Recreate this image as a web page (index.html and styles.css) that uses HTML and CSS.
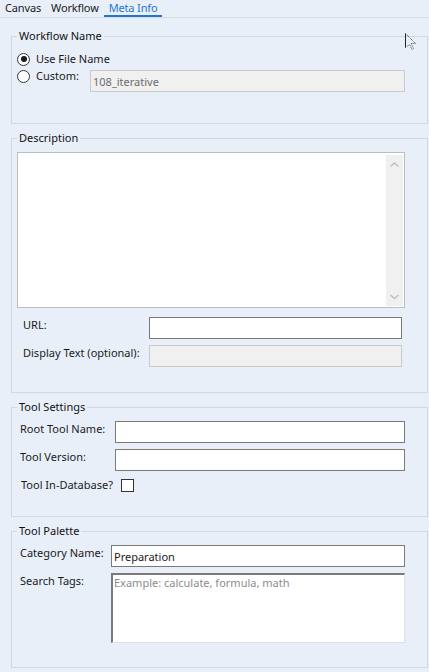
FILE: index.html
```html
<!DOCTYPE html>
<html>
<head>
<meta charset="utf-8">
<link rel="stylesheet" href="styles.css">
</head>
<body>
<div class="tabs">
  <div class="tab">Canvas</div>
  <div class="tab">Workflow</div>
  <div class="tab active">Meta Info</div>
</div>
<div class="content">
  <fieldset class="group g1">
    <legend>Workflow Name</legend>
    <div class="radio-row">
      <span class="radio checked"></span>
      <span class="rlabel">Use File Name</span>
    </div>
    <div class="radio-row custom">
      <span class="radio"></span>
      <span class="rlabel custom-label">Custom:</span>
      <input class="field disabled w-custom" type="text" value="108_iterative" disabled>
    </div>
  </fieldset>

  <fieldset class="group g2">
    <legend>Description</legend>
    <div class="desc">
      <textarea class="desc-text"></textarea>
      <div class="scrollbar">
        <svg class="chev" width="17" height="10" viewBox="0 0 17 10"><polyline points="4.5,6.5 8.5,3 12.5,6.5" fill="none" stroke="#bfbfbf" stroke-width="1.5"/></svg>
        <svg class="chev" width="17" height="10" viewBox="0 0 17 10"><polyline points="4.5,3 8.5,6.5 12.5,3" fill="none" stroke="#bfbfbf" stroke-width="1.5"/></svg>
      </div>
    </div>
    <div class="frow url-row">
      <label class="lab lab-url">URL:</label>
      <input class="field w-url" type="text">
    </div>
    <div class="frow">
      <label class="lab lab-url">Display Text (optional):</label>
      <input class="field disabled w-url" type="text" disabled>
    </div>
  </fieldset>

  <fieldset class="group g3">
    <legend>Tool Settings</legend>
    <div class="frow first">
      <label class="lab lab-ts">Root Tool Name:</label>
      <input class="field w-ts" type="text">
    </div>
    <div class="frow">
      <label class="lab lab-ts">Tool Version:</label>
      <input class="field w-ts" type="text">
    </div>
    <div class="check-row">
      <span class="clabel">Tool In-Database?</span>
      <span class="checkbox"></span>
    </div>
  </fieldset>

  <fieldset class="group g4">
    <legend>Tool Palette</legend>
    <div class="frow first">
      <label class="lab lab-tp">Category Name:</label>
      <input class="field w-tp" type="text" value="Preparation">
    </div>
    <div class="frow">
      <label class="lab lab-tp">Search Tags:</label>
      <textarea class="tags" placeholder="Example: calculate, formula, math"></textarea>
    </div>
  </fieldset>
</div>
<svg class="cursor" width="14" height="20" viewBox="0 0 14 20">
  <path d="M1.5 1.5 L1.5 15.5" stroke="#222" stroke-width="1" fill="none"/>
  <path d="M1.5 1.5 L11.5 11.5 L7 11.5 L9.5 16.5 L8 17.5 L5.5 12.5 L1.5 15.5" stroke="#444" stroke-width="1" stroke-dasharray="1 1" fill="none"/>
</svg>
</body>
</html>
```
FILE: styles.css
```css
* { box-sizing: border-box; }
html, body {
  margin: 0;
  padding: 0;
  width: 429px;
  height: 672px;
  overflow: hidden;
  background: #e9eff9;
}
body {
  font-family: "Noto Sans", "Open Sans", sans-serif;
  font-size: 11px;
  color: #1a1a1a;
  position: relative;
}
.tabs {
  display: flex;
  height: 18px;
  border-bottom: 1px solid #d6dce6;
}
.tab {
  padding: 0 5px;
  height: 17px;
  line-height: 15px;
  color: #1a1a1a;
  letter-spacing: -0.15px;
}
.tab.active {
  color: #1e78cf;
  border-bottom: 2px solid #1e78cf;
}
.content {
  padding: 10px 1px 0 11px;
}
.group {
  margin: 0 0 6px 0;
  border: 1px solid #d3d8e0;
  padding: 0 0 0 5px;
  width: 417px;
  min-width: 0;
}
.group legend {
  padding: 0 2px;
  margin-left: 0;
  line-height: 16px;
  font-size: 11px;
  color: #111;
}
.g1 { padding-top: 7px; padding-bottom: 31px; }
.g2 { padding-top: 6px; padding-bottom: 25px; }
.g3 { padding-top: 6px; padding-bottom: 23px; }
.g4 { padding-top: 6px; padding-bottom: 24px; }

.radio-row {
  display: flex;
  align-items: flex-start;
  height: 17px;
  line-height: 16px;
}
.radio-row.custom { height: 24px; }
.radio {
  width: 13px;
  height: 13px;
  border: 1px solid #333;
  border-radius: 50%;
  background: #fff;
  margin-top: 1.5px;
  display: flex;
  align-items: center;
  justify-content: center;
  flex: none;
}
.radio.checked::after {
  content: "";
  width: 6px;
  height: 6px;
  border-radius: 50%;
  background: #1a1a1a;
}
.rlabel { margin-left: 6px; }
.custom-label { width: 54px; }
.field {
  height: 22px;
  border: 1px solid #7a7a7a;
  background: #fff;
  font-family: inherit;
  font-size: 11px;
  color: #1a1a1a;
  padding: 0 2px;
  margin: 0;
  outline: none;
}
.field.disabled {
  background: #f0f0f0;
  border-color: #cacaca;
  color: #6d6d6d;
}
.radio-row .field { margin-top: 2px; }
.w-custom { width: 315px; }

.desc {
  display: flex;
  width: 388px;
  height: 156px;
  border: 1px solid #bdbdbd;
  background: #fff;
}
.desc-text {
  flex: 1;
  border: none;
  resize: none;
  outline: none;
  margin: 0;
  padding: 2px;
  font-family: inherit;
  font-size: 11px;
  background: transparent;
}
.scrollbar {
  width: 17px;
  margin: 2px 1px 1px 0;
  background: #f0f0f0;
  display: flex;
  flex-direction: column;
  justify-content: space-between;
  padding: 5px 0 4px;
}
.chev { display: block; }

.frow {
  display: flex;
  align-items: flex-start;
  margin-top: 6px;
}
.frow.first { margin-top: 0; }
.url-row { margin-top: 9px; }
.lab {
  line-height: 16px;
  flex: none;
}
.lab-url { width: 132px; padding-left: 6px; }
.w-url { width: 253px; }
.lab-ts { width: 98px; padding-left: 3px; }
.w-ts { width: 290px; }
.lab-tp { width: 94px; padding-left: 3px; }
.w-tp { width: 294px; }

.check-row {
  display: flex;
  align-items: center;
  height: 16px;
  margin-top: 6px;
  padding-left: 4px;
}
.clabel { line-height: 16px; }
.checkbox {
  width: 13px;
  height: 13px;
  border: 1px solid #333;
  background: #fff;
  margin-left: 8px;
}
.tags {
  width: 294px;
  height: 70px;
  resize: none;
  outline: none;
  margin: 0;
  background: #fff;
  border-top: 2px solid #7a7a7a;
  border-left: 2px solid #7a7a7a;
  border-right: 1px solid #e0e0e0;
  border-bottom: 1px solid #e0e0e0;
  padding: 0 1px;
  font-family: inherit;
  font-size: 11px;
  line-height: 16px;
  overflow: hidden;
}
.tags::placeholder { color: #8c8c8c; }
.cursor {
  position: absolute;
  left: 404px;
  top: 32px;
}
```
